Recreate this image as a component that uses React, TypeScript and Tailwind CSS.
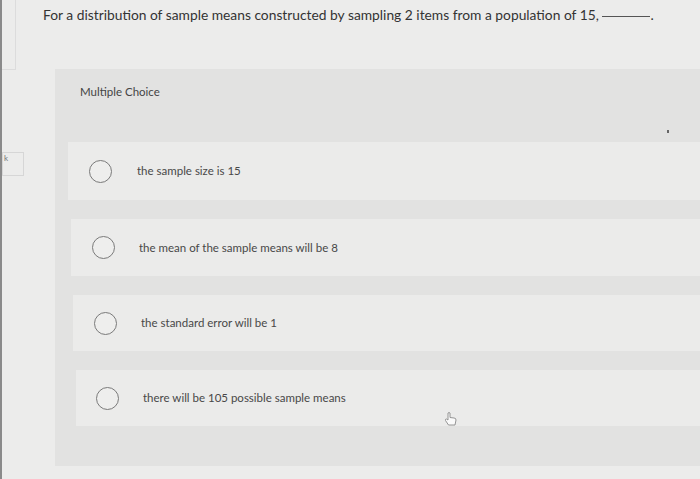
import React from "react";

const options = [
  { text: "the sample size is 15", row: "ml-[13px] h-[58px]", radio: "ml-[21px]", gap: "ml-[25px]" },
  { text: "the mean of the sample means will be 8", row: "ml-[16px] h-[57px]", radio: "ml-[21px]", gap: "ml-[24px]" },
  { text: "the standard error will be 1", row: "ml-[18px] h-[56px]", radio: "ml-[21px]", gap: "ml-[24px]" },
  { text: "there will be 105 possible sample means", row: "ml-[21px] h-[56px]", radio: "ml-[20px]", gap: "ml-[24px]" },
];

export default function App() {
  return (
    <div
      className="relative w-[700px] h-[479px] overflow-hidden bg-[#ececeb] border-l-2 border-[#8a8a8a] text-[#3a3a3a]"
      style={{ fontFamily: "Lato, 'Open Sans', 'Liberation Sans', sans-serif" }}
    >
      {/* left faint box */}
      <div className="absolute left-0 top-0 w-[14px] h-[70px] border-r border-b border-[#dcdcdc]" />
      <div className="absolute left-0 top-[152px] w-[22px] h-[24px] border border-[#d6d6d6] text-[8px] leading-[10px] text-[#777] pl-[1px]">k</div>

      <div className="pl-[41px] pt-[5px] h-[69px] text-[13.8px] text-[#333]">
        For a distribution of sample means constructed by sampling 2 items from a population of 15,{" "}
        <span className="inline-block w-[48px] border-b border-[#555] translate-y-[-3px]" />.
      </div>

      <div className="ml-[53px] h-[397px] bg-[#e2e2e1] flex flex-col">
        <div className="h-[73px] pl-[25px] pt-[14px] text-[11.5px] text-[#444]">Multiple Choice</div>
        <div className="flex flex-col gap-[19px]">
          {options.map((o) => (
            <div key={o.text} className={`${o.row} bg-[#ebebea] flex items-center`}>
              <div className={`${o.radio} w-[23px] h-[23px] shrink-0 rounded-full border-[1.5px] border-[#7a7a7a] bg-[#eeeeed]`} />
              <div className={`${o.gap} text-[11.5px] text-[#484848]`}>{o.text}</div>
            </div>
          ))}
        </div>
      </div>

      {/* dot marks */}
      <div className="absolute left-[665px] top-[130px] w-[2px] h-[3px] bg-[#666]" />
      {/* hand cursor */}
      <svg className="absolute left-[442px] top-[411px]" width="14" height="16" viewBox="0 0 14 16">
        <path d="M4 2 L4 9 L2.5 8 Q1 8 1.5 9.5 L4.5 14 L11 14 L12 9 Q12 7 10 7 L6 6.5 L6 2 Q5 1 4 2 Z" fill="#fafafa" stroke="#8a8a8a" strokeWidth="0.9" />
      </svg>
    </div>
  );
}
